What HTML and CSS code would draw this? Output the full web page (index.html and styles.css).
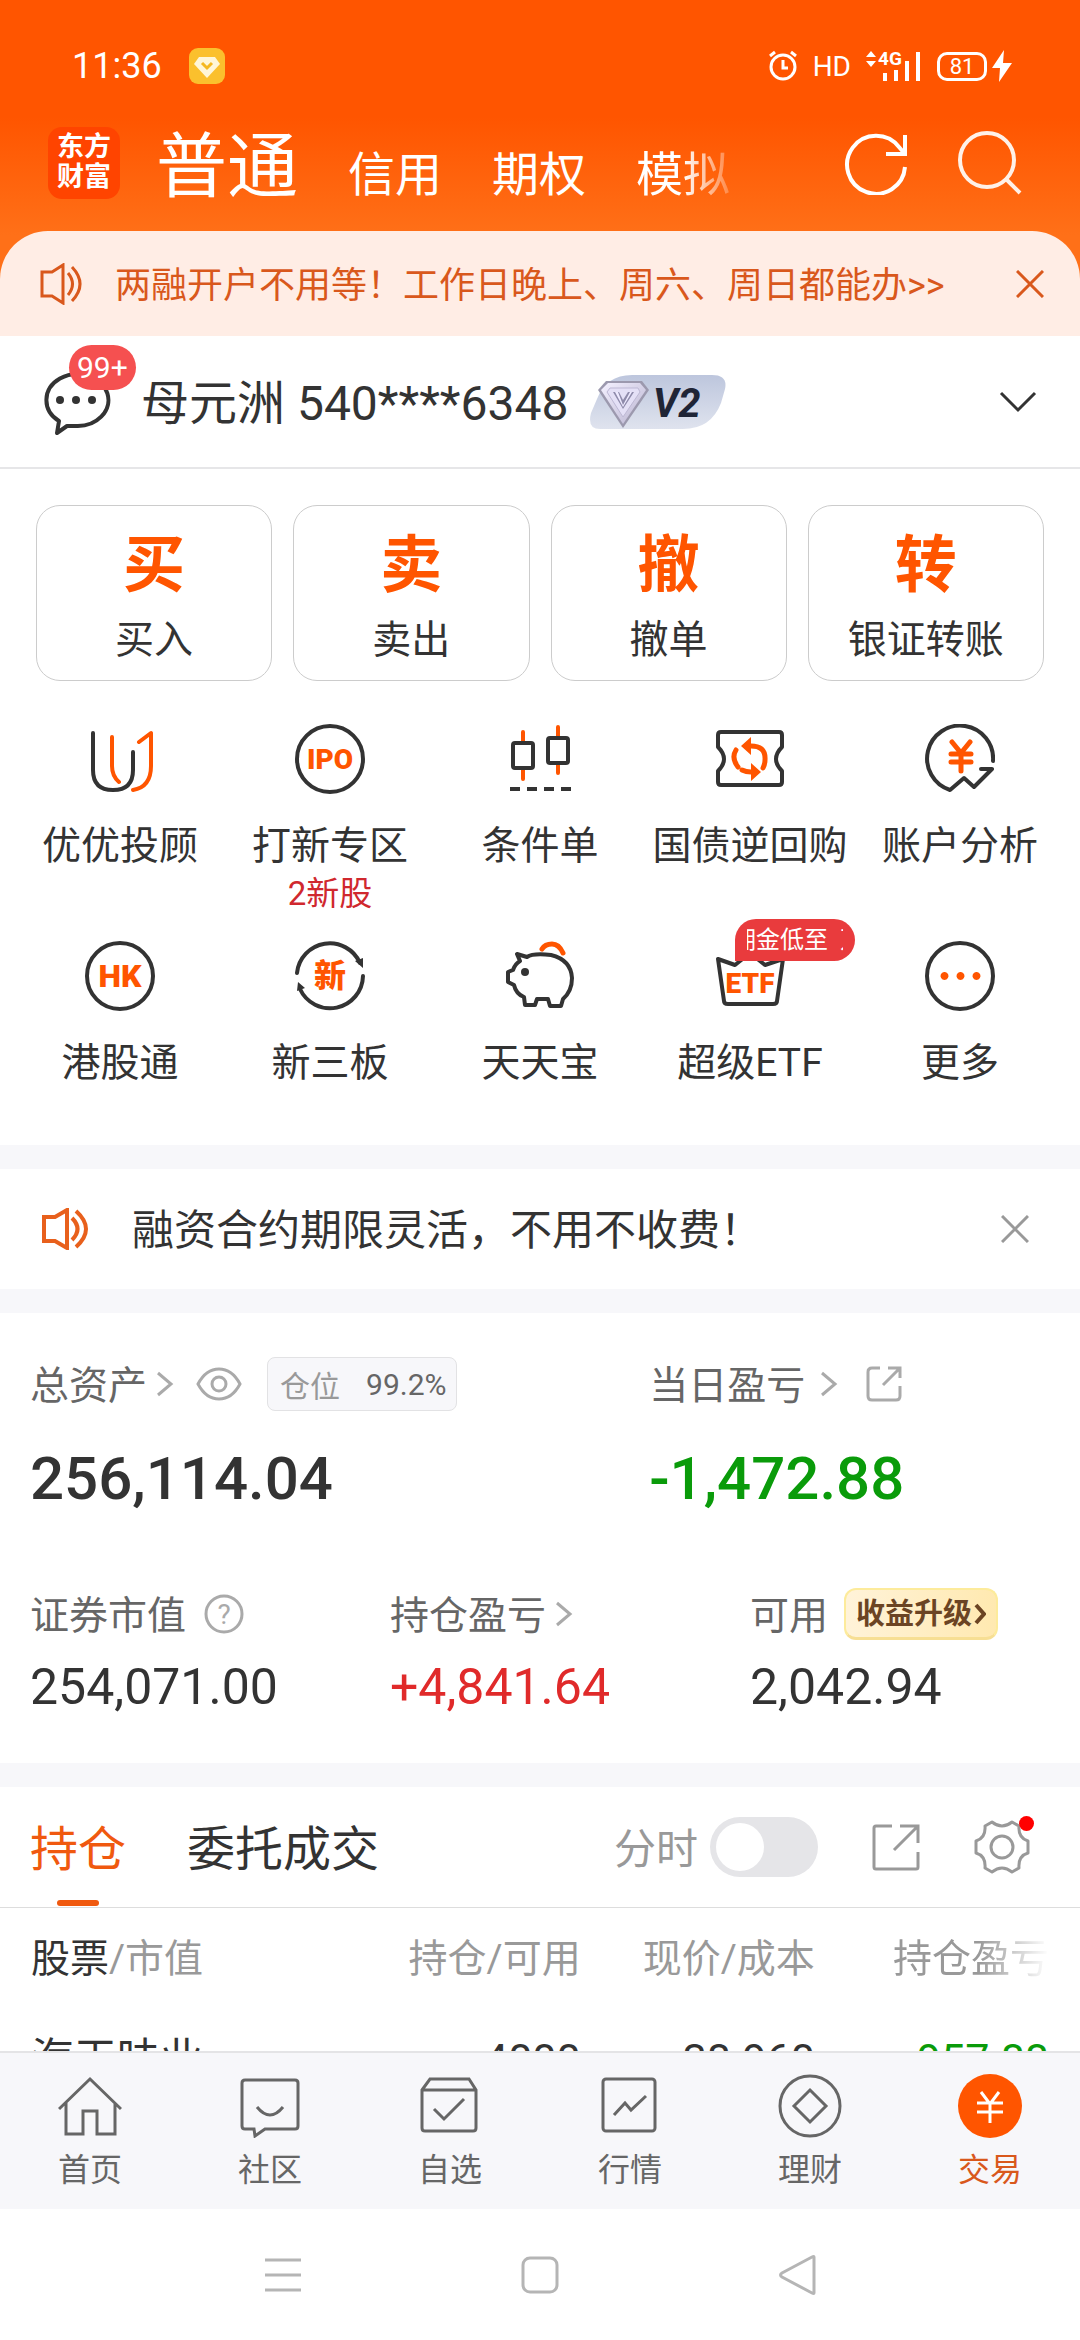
FILE: index.html
```html
<!DOCTYPE html>
<html lang="zh-CN">
  <head>
    <meta charset="UTF-8" />
    <meta name="viewport" content="width=device-width, initial-scale=1.0" />
    <title>交易</title>
    <link rel="stylesheet" href="styles.css">
  </head>
  <body>
    <header class="hero">
      <div class="statusBar">
        <span class="clock">11:36</span>
        <svg class="appDot" width="36" height="36" viewBox="0 0 36 36">
          <rect width="36" height="36" rx="9" fill="#fbc02d" />
          <path d="M10 9h16l5 7-13 14L5 16z" fill="#fff6d8" />
          <path d="M13 15l5 5 5-5" fill="none" stroke="#f5b820" stroke-width="3" />
        </svg>
        <div class="statusIcons">
          <svg width="30" height="32" viewBox="0 0 30 32" fill="none" stroke="#fff" stroke-width="3">
            <circle cx="15" cy="17" r="12" />
            <path d="M15 10v8h5M2 6l5-4M28 6l-5-4" />
          </svg>
          <span class="hd">HD</span>
          <svg width="56" height="32" viewBox="0 0 56 32" fill="#fff">
            <path d="M0 7l5-6 5 6zM0 11l5 6 5-6z" />
            <text class="netText" x="12" y="15">4G</text>
            <path d="M17 23h4v8h-4zM28 20h4v11h-4zM39 11h4v20h-4zM50 2h4v29h-4z" />
          </svg>
          <span class="battery">81</span>
          <svg class="bolt" width="20" height="32" viewBox="0 0 20 32" fill="#fff">
            <path d="M12 0L0 18h8L7 32l13-19h-9z" />
          </svg>
        </div>
      </div>
      <div class="titleRow">
        <div class="logo">东方<br />财富</div>
        <nav class="accountTabs">
          <a href="#" class="current">普通</a>
          <a href="#">信用</a>
          <a href="#">期权</a>
          <a href="#" class="fading">模拟</a>
        </nav>
        <button type="button" aria-label="刷新">
          <svg width="64" height="64" viewBox="0 0 64 64" fill="none" stroke="#fff" stroke-width="4">
            <path d="M61 36A29 29 0 1 1 55 16L61 23M61 4v19H42" />
          </svg>
        </button>
        <button type="button" aria-label="搜索">
          <svg width="64" height="64" viewBox="0 0 64 64" fill="none" stroke="#fff1e8" stroke-width="4">
            <circle cx="29" cy="29" r="27" />
            <path d="M48 48l14 14" />
          </svg>
        </button>
      </div>
      <div class="promo">
        <svg width="42" height="42" viewBox="0 0 42 42" fill="none" stroke="#d9581c" stroke-width="3">
          <path d="M2 9h10L23 2v38L12 33H2zM28 10q9 11 0 22M32 4q16 17 0 34" />
        </svg>
        <a href="#">两融开户不用等<span class="mark">！</span>工作日晚上、周六、周日都能办&gt;&gt;</a>
        <button type="button" aria-label="关闭">
          <svg width="28" height="28" viewBox="0 0 28 28" fill="none" stroke="#d9581c" stroke-width="3">
            <path d="M1 1l26 26M27 1L1 27" />
          </svg>
        </button>
      </div>
    </header>

    <main>
      <section class="userRow">
        <button type="button" class="messages" aria-label="消息">
          <svg width="68" height="68" viewBox="0 0 68 68">
            <path d="M14 65l2-12A31 26 0 1 1 32 58q-6 0-8 0z" fill="none" stroke="#333" stroke-width="4" stroke-linejoin="round" />
            <circle cx="17" cy="32" r="4" fill="#333" />
            <circle cx="33" cy="32" r="4" fill="#333" />
            <circle cx="49" cy="32" r="4" fill="#333" />
          </svg>
          <span class="count">99+</span>
        </button>
        <span class="userName">母元洲 540****6348</span>
        <svg class="level" width="136" height="54" viewBox="0 0 136 54">
          <defs>
            <linearGradient id="levelBg" x1="0" y1="0" x2="0" y2="1">
              <stop offset="0" stop-color="#bdc6dd" />
              <stop offset="1" stop-color="#dfe3ee" />
            </linearGradient>
            <linearGradient id="gem" x1="0" y1="0" x2="1" y2="1">
              <stop offset="0" stop-color="#f4f1ff" />
              <stop offset="1" stop-color="#b9b3d0" />
            </linearGradient>
          </defs>
          <path d="M42 0H122Q138 0 135 14L131 28Q121 54 93 54H10Q-3 54 1 38L7 24Q16 0 42 0Z" fill="url(#levelBg)" />
          <path d="M16 6H52L59 15 33 53 8 15Z" fill="#9c99ae" />
          <path d="M18 8H50L56 15 33 49 11 15Z" fill="url(#gem)" />
          <path d="M20 13H48L50 17 33 42 17 17Z" fill="#e4e0f6" stroke="#bdb8d4" stroke-width="1" />
          <path d="M23 17h6l4 8 5-8h6L33 34z" fill="#8f8bab" />
          <path d="M25 17h3l5 13 7-13h2L33 32z" fill="#eeeaff" />
          <text class="levelText" x="63" y="42">V2</text>
        </svg>
        <button type="button" class="expand" aria-label="展开">
          <svg width="38" height="22" viewBox="0 0 38 22" fill="none" stroke="#333" stroke-width="3">
            <path d="M2 2l17 17L36 2" />
          </svg>
        </button>
      </section>

      <section class="actions">
        <div class="tradeCards">
          <button type="button"><b>买</b><span>买入</span></button>
          <button type="button"><b>卖</b><span>卖出</span></button>
          <button type="button"><b>撤</b><span>撤单</span></button>
          <button type="button"><b>转</b><span>银证转账</span></button>
        </div>
        <div class="services">
          <a href="#">
            <svg class="icon" viewBox="0 0 70 70">
              <path d="M8 9V46Q8 66 28 66T48 46V28" />
              <path class="accent" d="M27 13V42Q27 52 34 58M54 18L66 9V42Q66 63 48 66" />
            </svg>
            <span>优优投顾</span>
          </a>
          <a href="#">
            <svg class="icon" viewBox="0 0 70 70">
              <circle cx="35" cy="35" r="33" />
              <text x="35" y="45" class="latin">IPO</text>
            </svg>
            <span>打新专区</span>
            <em>2新股</em>
          </a>
          <a href="#">
            <svg class="icon" viewBox="0 0 70 70">
              <path class="accent" d="M18 8V18M18 45V55M53 3V13M53 40V49" />
              <rect x="8" y="19" width="20" height="25" rx="2" />
              <rect x="43" y="14" width="20" height="25" rx="2" />
              <path d="M5 65H66" stroke-dasharray="10 7" stroke-linecap="butt" />
            </svg>
            <span>条件单</span>
          </a>
          <a href="#">
            <svg class="icon" viewBox="0 0 70 70">
              <path d="M6 8H64Q67 8 67 11V23Q61 29 61 35T67 47V58Q67 61 64 61H6Q3 61 3 58V47Q9 41 9 35T3 23V11Q3 8 6 8Z" />
              <path class="accent thick" d="M23 43Q16 34 21 26M34 22Q51 21 50 36Q50 40 48 44M27 46Q31 48 36 48" />
              <path class="fill" d="M36 13V31L26 22ZM36 39V57L46 48Z" />
            </svg>
            <span>国债逆回购</span>
          </a>
          <a href="#">
            <svg class="icon" viewBox="0 0 70 70">
              <path d="M68 37A33 33 0 1 0 25 66L39 54 49 63 67 45H56" />
              <path class="accent thick" d="M27 18L36 29 45 18M36 29V47M26 30H46M26 38H46" />
            </svg>
            <span>账户分析</span>
          </a>
          <a href="#">
            <svg class="icon" viewBox="0 0 70 70">
              <circle cx="35" cy="35" r="33" />
              <text x="35" y="46" class="latin big">HK</text>
            </svg>
            <span>港股通</span>
          </a>
          <a href="#">
            <svg class="icon" viewBox="0 0 70 70">
              <path d="M2 32A33 33 0 0 1 65 22M68 35A33 33 0 0 1 5 48" />
              <path class="dark" d="M60 20L68 17V27ZM2 50L3 41 10 47Z" />
              <text x="35" y="46" class="cjk">新</text>
            </svg>
            <span>新三板</span>
          </a>
          <a href="#">
            <svg class="icon" viewBox="0 0 70 70">
              <path d="M12 13L22 16Q28 12 46 14Q66 19 67 37Q67 50 58 58L56 65H45L43 58H32L30 64H20L19 56Q11 53 9 44L3 41V31L8 29Q10 23 15 20Z" />
              <path class="accent thick" d="M37 8Q40 3 47 3T58 12" />
              <circle class="dark" cx="20" cy="31" r="4" />
            </svg>
            <span>天天宝</span>
          </a>
          <a href="#">
            <svg class="icon" viewBox="0 0 70 70">
              <path d="M3 18L9 60Q9 63 13 63H58Q62 63 62 60L68 18 50 24 35 12 20 24Z" />
              <text x="35" y="52" class="latin">ETF</text>
            </svg>
            <span>超级ETF</span>
            <i class="flag"><span>佣金低至&nbsp;&nbsp;万</span></i>
          </a>
          <a href="#">
            <svg class="icon" viewBox="0 0 70 70">
              <circle cx="35" cy="35" r="33" />
              <path class="fill" d="M19 31a4 4 0 1 0 1 0zM35 31a4 4 0 1 0 1 0zM51 31a4 4 0 1 0 1 0z" />
            </svg>
            <span>更多</span>
          </a>
        </div>
      </section>

      <section class="notice">
        <svg width="48" height="42" viewBox="0 0 48 42" fill="none" stroke="#e8601c" stroke-width="4">
          <path d="M2 9h11L25 2v38L13 33H2zM30 10q11 11 0 22M34 3q20 18 0 36" />
        </svg>
        <a href="#">融资合约期限灵活，不用不收费<span class="mark">！</span></a>
        <button type="button" aria-label="关闭">
          <svg width="28" height="28" viewBox="0 0 28 28" fill="none" stroke="#999" stroke-width="3">
            <path d="M1 1l26 26M27 1L1 27" />
          </svg>
        </button>
      </section>

      <section class="assets">
        <div class="assetsTop">
          <div class="assetItem">
            <div class="assetLabel">
              <span class="name">总资产</span>
              <svg width="18" height="26" viewBox="0 0 18 26"><path d="M2 2l13 11L2 24" /></svg>
              <svg class="eye" width="46" height="34" viewBox="0 0 46 34">
                <path d="M2 17Q10 2 23 2T44 17Q36 32 23 32T2 17Z" />
                <circle cx="23" cy="17" r="7" />
              </svg>
              <span class="position"><span>仓位</span><span>99.2%</span></span>
            </div>
            <div class="total">256,114.04</div>
          </div>
          <div class="assetItem">
            <div class="assetLabel">
              <span class="name">当日盈亏</span>
              <svg class="more" width="18" height="26" viewBox="0 0 18 26"><path d="M2 2l13 11L2 24" /></svg>
              <svg class="share" width="36" height="36" viewBox="0 0 36 36">
                <path d="M14 2H6Q2 2 2 6V30Q2 34 6 34H30Q34 34 34 30V20M22 2H34V12M34 2L17 19" />
              </svg>
            </div>
            <div class="total down">-1,472.88</div>
          </div>
        </div>
        <div class="assetsBottom">
          <div class="assetItem">
            <div class="assetLabel">
              <span class="name">证券市值</span>
              <svg class="help" width="40" height="40" viewBox="0 0 40 40">
                <circle cx="20" cy="20" r="18" />
                <text x="20" y="30">?</text>
              </svg>
            </div>
            <div class="amount">254,071.00</div>
          </div>
          <div class="assetItem">
            <div class="assetLabel">
              <span class="name">持仓盈亏</span>
              <svg width="18" height="26" viewBox="0 0 18 26"><path d="M2 2l13 11L2 24" /></svg>
            </div>
            <div class="amount up">+4,841.64</div>
          </div>
          <div class="assetItem">
            <div class="assetLabel">
              <span class="name">可用</span>
              <a href="#" class="upgrade">收益升级<svg width="12" height="24" viewBox="0 0 12 24"><path d="M2 3l8 9-8 9" /></svg></a>
            </div>
            <div class="amount">2,042.94</div>
          </div>
        </div>
      </section>

      <section class="holdings">
        <div class="holdingsBar">
          <button type="button" class="tab active">持仓</button>
          <button type="button" class="tab">委托成交</button>
          <label class="timeShare" for="time-share">分时</label>
          <input type="checkbox" class="switch" id="time-share" />
          <button type="button" class="tool" aria-label="分享">
            <svg width="48" height="48" viewBox="0 0 48 48" fill="none" stroke="#999" stroke-width="3">
              <path d="M20 3H4Q2 3 2 5V44Q2 46 4 46H44Q46 46 46 44V29M28 3H46V20M46 3L22 27" />
            </svg>
          </button>
          <button type="button" class="tool settings" aria-label="设置">
            <svg width="56" height="56" viewBox="0 0 56 56" fill="none" stroke="#999" stroke-width="3" stroke-linejoin="round">
              <path d="M18 3Q28 11 38 3L45 7Q44 19 54 22V34Q44 37 45 49L38 53Q28 45 18 53L11 49Q12 37 2 34V22Q12 19 11 7Z" />
              <circle cx="28" cy="28" r="11" />
            </svg>
            <span class="redDot"></span>
          </button>
        </div>
        <table>
          <thead>
            <tr>
              <th><b>股票</b>/市值</th>
              <th>持仓/可用</th>
              <th>现价/成本</th>
              <th class="fadingHead">持仓盈亏</th>
            </tr>
          </thead>
          <tbody>
            <tr>
              <td>海天味业</td>
              <td>4000</td>
              <td>38.960</td>
              <td class="down">-957.88</td>
            </tr>
          </tbody>
        </table>
      </section>
    </main>

    <footer>
      <nav class="bottomNav">
        <a href="#">
          <svg viewBox="0 0 64 64"><path d="M1 35L32 5 63 35M8 29V60H25V37H39V60H57V29" /></svg>
          首页
        </a>
        <a href="#">
          <svg viewBox="0 0 64 64"><path d="M7 6H57Q60 6 60 9V52Q60 55 57 55H27L17 62 16 55H7Q4 55 4 52V9Q4 6 7 6ZM19 33Q32 49 45 33" /></svg>
          社区
        </a>
        <a href="#">
          <svg viewBox="0 0 64 64"><path d="M4 16L12 5H51L58 16V54Q58 57 55 57H7Q4 57 4 54ZM4 16H58M16 35L26 45 46 25" /></svg>
          自选
        </a>
        <a href="#">
          <svg viewBox="0 0 64 64"><rect x="5" y="5" width="52" height="52" rx="3" /><path d="M16 41L27 29 33 36 48 22" /></svg>
          行情
        </a>
        <a href="#">
          <svg viewBox="0 0 64 64"><circle cx="32" cy="32" r="30" /><path d="M32 16L48 32 32 48 16 32Z" /></svg>
          理财
        </a>
        <a href="#" class="selected">
          <svg viewBox="0 0 64 64"><circle cx="32" cy="32" r="32" /><path d="M23 18L32 30 41 18M32 30V49M19 29H45M19 38H45" /></svg>
          交易
        </a>
      </nav>
      <div class="systemNav">
        <svg width="40" height="40" viewBox="0 0 40 40"><path d="M2 5H38M2 20H38M2 35H38" /></svg>
        <svg width="40" height="40" viewBox="0 0 40 40"><rect x="3" y="3" width="34" height="34" rx="7" /></svg>
        <svg width="40" height="40" viewBox="0 0 40 40"><path d="M37 2V38Q37 39 35 38L5 22Q2 20 5 18L35 2Q37 1 37 2Z" /></svg>
      </div>
    </footer>
  </body>
</html>
```
FILE: styles.css
```css
html {
  box-sizing: border-box;
  font-family: Roboto, "Noto Sans CJK SC", sans-serif;
  color: #333;
}

*,
*:before,
*:after {
  box-sizing: inherit;
}

body {
  margin: 0;
  height: 100vh;
  display: flex;
  flex-direction: column;
  background-color: #fff;
}

a {
  color: inherit;
  text-decoration: none;
}

button {
  padding: 0;
  border: none;
  background: none;
  font: inherit;
  color: inherit;
  cursor: pointer;
}

svg {
  display: block;
  flex: none;
}

.mark {
  font-family: "Noto Sans CJK TC", sans-serif;
}

.hero {
  flex: none;
  background: linear-gradient(#ff5500 35%, #ff7018 70%);
  color: #fff;
}

.statusBar {
  display: flex;
  align-items: center;
  height: 132px;
  padding: 0 68px 0 72px;
}

.clock {
  font-size: 36px;
}

.appDot {
  margin-left: 27px;
}

.statusIcons {
  display: flex;
  align-items: center;
  gap: 15px;
  margin-left: auto;
}

.hd {
  font-size: 28px;
}

.netText {
  font-size: 19px;
  font-weight: bold;
}

.battery {
  width: 50px;
  border: 3px solid #fff;
  border-radius: 10px;
  font-size: 22px;
  line-height: 23px;
  text-align: center;
}

.bolt {
  margin-left: -10px;
}

.titleRow {
  display: flex;
  align-items: center;
  height: 62px;
  margin-bottom: 37px;
  padding: 0 58px 0 48px;
}

.titleRow > button {
  margin-left: 50px;
}

.logo {
  width: 72px;
  height: 72px;
  padding-top: 5px;
  border-radius: 14px;
  background-color: #ff4400;
  font-size: 27px;
  font-weight: bold;
  line-height: 30px;
  text-align: center;
}

.accountTabs {
  flex: 1;
  display: flex;
  align-items: baseline;
  gap: 50px;
  margin-left: 36px;
  padding-top: 16px;
  overflow: hidden;
  font-size: 47px;
  line-height: 80px;
  white-space: nowrap;
}

.accountTabs .current {
  font-size: 71px;
}

.fading {
  mask-image: linear-gradient(to right, #000 50%, transparent 115%);
}

.promo {
  display: flex;
  align-items: center;
  height: 105px;
  padding: 0 36px 0 40px;
  border-radius: 48px 48px 0 0;
  background-color: #ffede5;
  color: #d9581c;
  font-size: 36px;
  line-height: 48px;
}

.promo a {
  flex: 1;
  margin-left: 33px;
}

main {
  flex: 1;
  min-height: 0;
  overflow: hidden;
}

.userRow {
  display: flex;
  align-items: center;
  height: 133px;
  padding: 0 43px;
  border-bottom: 2px solid #e6e6e8;
}

.messages {
  position: relative;
}

.count {
  position: absolute;
  left: 26px;
  top: -23px;
  padding: 0 8px;
  border-radius: 23px;
  background-color: #f55050;
  color: #fff;
  font-size: 30px;
  line-height: 45px;
}

.userName {
  margin-left: 30px;
  padding-bottom: 5px;
  font-size: 48px;
}

.level {
  margin-left: 22px;
}

.levelText {
  fill: #1f2536;
  font-size: 40px;
  font-weight: bold;
  font-style: italic;
}

.expand {
  margin-left: auto;
}

.actions {
  padding: 36px 15px 62px;
}

.tradeCards {
  display: grid;
  grid-template-columns: repeat(4, 1fr);
  gap: 21px;
  padding: 0 21px;
}

.tradeCards button {
  display: flex;
  flex-direction: column;
  align-items: center;
  gap: 22px;
  padding: 28px 0 20px;
  border: 1px solid #ccc;
  border-radius: 24px;
}

.tradeCards b {
  color: #ff5500;
  font-size: 62px;
  line-height: 64px;
}

.tradeCards span {
  font-size: 39px;
  line-height: 40px;
}

.services {
  display: grid;
  grid-template-columns: repeat(5, 1fr);
  row-gap: 27px;
  margin-top: 43px;
}

.services a {
  position: relative;
  display: flex;
  flex-direction: column;
  align-items: center;
  font-size: 39px;
  line-height: 40px;
  white-space: nowrap;
}

.services em {
  margin-top: 8px;
  color: #d0282e;
  font-size: 33px;
  font-style: normal;
}

.icon {
  width: 70px;
  height: 70px;
  margin-bottom: 32px;
  fill: none;
  stroke: #333;
  stroke-width: 4;
  stroke-linecap: round;
  stroke-linejoin: round;
}

.icon .accent {
  stroke: #ff5500;
}

.icon .thick {
  stroke-width: 5;
}

.icon .fill {
  fill: #ff5500;
  stroke: none;
}

.icon .dark {
  fill: #333;
  stroke: none;
}

.icon text {
  fill: #ff5500;
  stroke: none;
  font-weight: 900;
  text-anchor: middle;
}

.icon .latin {
  font-size: 28px;
}

.icon .big,
.icon .cjk {
  font-size: 32px;
}

.flag {
  position: absolute;
  left: 90px;
  top: -22px;
  width: 120px;
  padding: 0 12px;
  border-radius: 21px 21px 21px 0;
  background-color: #e93b3d;
  color: #fff;
  font-size: 24px;
  font-style: normal;
  line-height: 42px;
}

.flag span {
  display: block;
  overflow: hidden;
  text-indent: -15px;
}

.notice {
  display: flex;
  align-items: center;
  height: 168px;
  padding: 0 51px 0 42px;
  border: solid #f7f7fa;
  border-width: 24px 0;
  font-size: 42px;
  line-height: 54px;
}

.notice a {
  flex: 1;
  margin-left: 42px;
}

.assets {
  padding: 44px 0 51px;
  border-bottom: 24px solid #f7f7fa;
}

.assetsTop {
  display: grid;
  grid-template-columns: 43fr 32fr;
}

.assetsBottom {
  display: grid;
  grid-template-columns: repeat(3, 1fr);
  margin-top: 78px;
}

.assetItem {
  padding-left: 30px;
}

.assetLabel {
  display: flex;
  align-items: center;
  height: 54px;
  color: #666;
  font-size: 39px;
}

.name {
  padding-bottom: 5px;
}

.assetLabel svg {
  margin-left: 9px;
  fill: none;
  stroke: #aaa;
  stroke-width: 3;
}

.assetLabel .eye {
  margin-left: 22px;
}

.assetLabel .more {
  margin-left: 15px;
}

.assetLabel .share {
  margin-left: 28px;
}

.assetLabel .help {
  margin-left: 18px;
}

.help text {
  fill: #aaa;
  stroke: none;
  font-size: 28px;
  text-anchor: middle;
}

.position {
  display: flex;
  align-items: center;
  gap: 26px;
  height: 54px;
  margin-left: 25px;
  padding: 0 10px 0 12px;
  border: 1px solid #e2e2e4;
  border-radius: 8px;
  background-color: #f7f7fa;
  font-size: 30px;
}

.position span:first-child {
  color: #999;
}

.total {
  margin-top: 38px;
  font-size: 60px;
  font-weight: 500;
  line-height: 60px;
}

.amount {
  margin-top: 21px;
  font-size: 50px;
  line-height: 50px;
}

.up {
  color: #e02a2a;
}

.down {
  color: #0a9b0a;
}

.upgrade {
  display: flex;
  align-items: center;
  height: 52px;
  margin-left: 16px;
  padding: 0 10px;
  border: 2px solid #fdeb9b;
  border-bottom: 3px solid #f7df94;
  border-radius: 12px;
  background: linear-gradient(to right, #fff3d9, #ffe9b0);
  color: #6b4423;
  font-size: 29px;
  font-weight: bold;
  line-height: 44px;
}

.assetLabel .upgrade svg {
  margin-left: 2px;
  stroke: #6b4423;
  stroke-width: 4;
}

.holdingsBar {
  display: flex;
  align-items: center;
  height: 121px;
  padding: 0 50px 0 30px;
  border-bottom: 1px solid #ddd;
}

.tab {
  position: relative;
  margin-right: 61px;
  padding-bottom: 4px;
  font-size: 48px;
}

.active {
  color: #f0590f;
}

.active:after {
  content: "";
  position: absolute;
  left: 27px;
  bottom: -22px;
  width: 42px;
  height: 6px;
  border-radius: 3px;
  background-color: #f0590f;
}

.timeShare {
  margin-left: auto;
  padding-bottom: 4px;
  color: #999;
  font-size: 42px;
}

.switch {
  appearance: none;
  width: 108px;
  height: 60px;
  margin: 0 0 0 12px;
  padding: 6px;
  border-radius: 30px;
  background-color: #e5e5e8;
}

.switch:before {
  content: "";
  display: block;
  width: 48px;
  height: 48px;
  border-radius: 50%;
  background-color: #fff;
}

.switch:checked {
  background-color: #ff5500;
}

.switch:checked:before {
  margin-left: auto;
}

.tool {
  position: relative;
  margin-left: 54px;
}

.redDot {
  position: absolute;
  right: -4px;
  top: -3px;
  width: 15px;
  height: 15px;
  border-radius: 50%;
  background-color: #f00;
}

table {
  width: calc(100% - 62px);
  margin: 0 31px;
  border-collapse: collapse;
  table-layout: fixed;
  white-space: nowrap;
}

th {
  width: 23%;
  height: 99px;
  padding: 0 0 5px;
  color: #999;
  font-size: 39px;
  font-weight: normal;
  text-align: right;
}

th:first-child {
  width: 31%;
}

th b {
  color: #333;
  font-weight: normal;
}

td {
  padding: 27px 0 0;
  font-size: 43px;
  line-height: 50px;
  text-align: right;
}

th:first-child,
td:first-child {
  text-align: left;
}

.fadingHead {
  mask-image: linear-gradient(to right, #000 70%, transparent);
}

footer {
  flex: none;
}

.bottomNav {
  display: grid;
  grid-template-columns: repeat(6, 1fr);
  padding: 21px 0 19px;
  border-top: 2px solid #e4e4e6;
  background-color: #f7f7fa;
}

.bottomNav a {
  display: flex;
  flex-direction: column;
  align-items: center;
  gap: 12px;
  color: #666;
  font-size: 32px;
  line-height: 40px;
}

.bottomNav svg {
  width: 64px;
  height: 64px;
  fill: none;
  stroke: #666;
  stroke-width: 3;
}

.bottomNav .selected {
  color: #d9581c;
}

.selected circle {
  fill: #ff5500;
  stroke: none;
}

.bottomNav .selected path {
  stroke: #fff;
}

.systemNav {
  display: grid;
  grid-template-columns: repeat(3, 1fr);
  place-items: center;
  height: 131px;
  padding: 0 154px;
}

.systemNav svg {
  fill: none;
  stroke: #b5b5b5;
  stroke-width: 3;
}
```
